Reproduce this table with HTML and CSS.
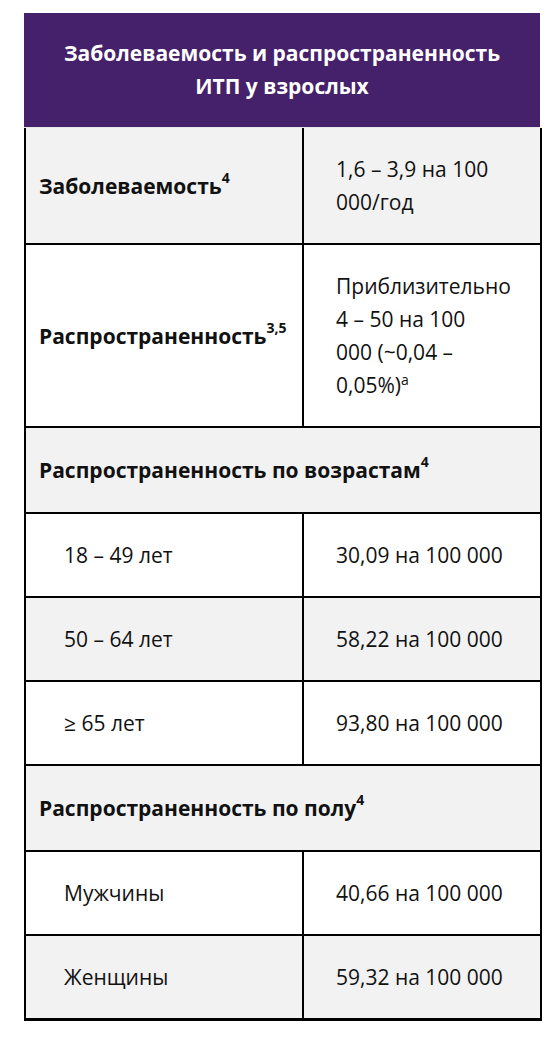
FILE: index.html
```html
<!DOCTYPE html>
<html lang="ru">
<head>
<meta charset="utf-8">
<link rel="stylesheet" href="styles.css">
</head>
<body>
<div class="wrap">
  <div class="head">Заболеваемость и распространенность<br>ИТП у взрослых</div>
  <table class="data">
    <colgroup><col class="c1"><col class="c2"></colgroup>
    <tr class="gray">
      <td class="lbl"><b>Заболеваемость<sup>4</sup></b></td>
      <td class="val">1,6 – 3,9 на 100 000/год</td>
    </tr>
    <tr>
      <td class="lbl"><b>Распространенность<sup>3,5</sup></b></td>
      <td class="val">Приблизительно 4 – 50 на 100 000&nbsp;(~0,04 – 0,05%)<sup class="n">a</sup></td>
    </tr>
    <tr class="gray sect">
      <td class="lbl" colspan="2"><b>Распространенность по возрастам<sup>4</sup></b></td>
    </tr>
    <tr>
      <td class="sub">18 – 49 лет</td>
      <td class="val">30,09 на 100 000</td>
    </tr>
    <tr class="gray">
      <td class="sub">50 – 64 лет</td>
      <td class="val">58,22 на 100 000</td>
    </tr>
    <tr>
      <td class="sub">≥ 65 лет</td>
      <td class="val">93,80 на 100 000</td>
    </tr>
    <tr class="gray sect">
      <td class="lbl" colspan="2"><b>Распространенность по полу<sup>4</sup></b></td>
    </tr>
    <tr>
      <td class="sub">Мужчины</td>
      <td class="val">40,66 на 100 000</td>
    </tr>
    <tr class="gray">
      <td class="sub">Женщины</td>
      <td class="val">59,32 на 100 000</td>
    </tr>
  </table>
</div>
</body>
</html>
```
FILE: styles.css
```css
html, body {
  margin: 0;
  padding: 0;
  background: #ffffff;
}
body {
  font-family: "Open Sans", "Noto Sans", sans-serif;
  color: #111111;
}
.wrap {
  width: 516px;
  margin: 13px 0 0 24px;
}
.head {
  background: #45216b;
  color: #ffffff;
  font-weight: 700;
  font-size: 21px;
  line-height: 33px;
  text-align: center;
  height: 115px;
  box-sizing: border-box;
  padding-top: 24px;
  border-bottom: 1px solid #e6e6e6;
}
.data {
  width: 516px;
  border-collapse: collapse;
  table-layout: fixed;
  font-size: 21px;
  line-height: 33px;
}
.c1 { width: 278px; }
.c2 { width: 238px; }
.data td {
  border: 2px solid #000000;
  padding: 25px 22px 24px 32px;
  vertical-align: middle;
  text-align: left;
}
.data tr.sect td { padding-top: 26px; padding-bottom: 25px; }
.data tr:first-child td { border-top: none; }
.data tr:last-child td { border-bottom-width: 3px; }
.data td.lbl { padding-left: 13px; }
.data td.sub { padding-left: 38px; }
.gray td { background: #f2f2f2; }
sup {
  font-size: 14px;
  line-height: 0;
  vertical-align: 11px;
  font-weight: 700;
}
sup.n { font-weight: 400; vertical-align: 8px; }
```
